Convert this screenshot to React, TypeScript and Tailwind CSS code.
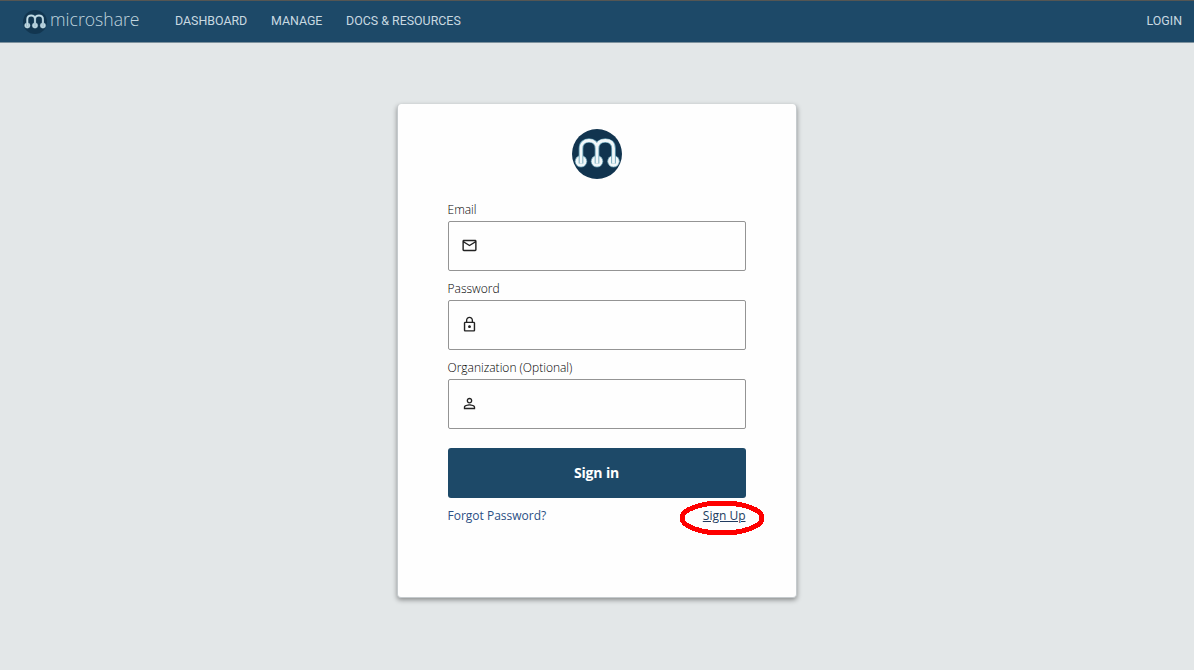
import type { ReactNode } from 'react';
import { MdLockOutline, MdMailOutline, MdPersonOutline } from 'react-icons/md';

function Logo({ className, disc, line, edge }: { className: string; disc: string; line: string; edge: string }) {
  const m = 'M9 34.5V19.5C9 14 12.5 11.5 17 11.5S25 14 25 19.5V34.5M25 19.5C25 14 28.5 11.5 33.3 11.5S41.5 14 41.5 19.5V34.5';
  return (
    <svg viewBox="0 0 50 50" className={className} fill="none" aria-hidden="true">
      <circle cx="25" cy="25" r="25" fill={disc} />
      <g fill={line} stroke={edge} strokeWidth="0.7">
        <circle cx="9" cy="32.3" r="5.8" />
        <circle cx="25" cy="32.3" r="5.8" />
        <circle cx="41.5" cy="32.3" r="5.8" />
      </g>
      <path d={m} stroke={edge} strokeWidth="4.6" />
      <path d={m} stroke={line} strokeWidth="2.8" />
    </svg>
  );
}

function Field({ label, type, icon }: { label: string; type: string; icon: ReactNode }) {
  return (
    <label className="block h-[79px]">
      <span className="-ml-[0.5px] block h-[21px] pt-px text-[12px] leading-[18px] font-light text-black">{label}</span>
      <span className="flex h-[50px] items-center rounded-[2px] border border-[#949494] pb-[2px] pl-[12px] text-[17px] text-[#222]">
        {icon}
        <input type={type} className="ml-3 min-w-0 flex-1 outline-none" />
      </span>
    </label>
  );
}

export default function App() {
  return (
    <div className="flex h-[670px] flex-col bg-[#e3e7e8] font-['Open_Sans',sans-serif]">
      <header className="flex h-[43px] shrink-0 items-center border-t border-b border-t-[#555653] border-b-[#7e929e] bg-[#1d4968] pr-3 pl-[23px] font-[Roboto,sans-serif] text-[12.4px] text-[#c9d9e1]">
        <Logo className="size-6" disc="#123650" line="#c4dbe4" edge="#7fa6b8" />
        <svg className="ml-[3px] h-8 w-[91px]" viewBox="0 0 91 32">
          <text
            x="0"
            y="20"
            textLength="89.5"
            lengthAdjust="spacingAndGlyphs"
            className="fill-[#c0d5df] font-['Open_Sans',sans-serif] text-[18px] font-light"
          >
            microshare
          </text>
        </svg>
        <nav className="ml-[34px] flex gap-[23.7px] pb-px">
          <a href="#dashboard">DASHBOARD</a>
          <a href="#manage">MANAGE</a>
          <a href="#docs">DOCS &amp; RESOURCES</a>
        </nav>
        <a href="#login" className="ml-auto pb-px">LOGIN</a>
      </header>
      <main className="flex justify-center pt-[61px]">
        <section className="h-[494px] w-[400px] rounded-[4px] border-x border-b border-[#c5cacd] bg-[#fefefe] px-[50px] pt-[25px] shadow-[0_2px_5px_rgba(0,0,0,0.4)]">
          <Logo className="mx-auto size-[50px]" disc="#11344f" line="#f1f8fa" edge="#6ba3b8" />
          <form className="mt-[21px]">
            <Field label="Email" type="email" icon={<MdMailOutline />} />
            <Field label="Password" type="password" icon={<MdLockOutline />} />
            <Field label="Organization (Optional)" type="text" icon={<MdPersonOutline />} />
            <button type="button" className="mt-[11px] block h-[50px] w-full rounded-[3px] bg-[#1d4968] pr-px pb-[2px] text-[14px] font-bold tracking-[-0.15px] text-white">
              Sign in
            </button>
            <div className="mt-[9px] flex justify-between text-[12px] leading-[18px] text-[#2b4f84]">
              <a href="#forgot" className="-ml-[0.5px]">Forgot Password?</a>
              <span className="relative">
                <a href="#signup" className="mr-[0.5px] text-[#203b60] underline">Sign Up</a>
                <svg className="pointer-events-none absolute -top-[7px] -right-[19px] h-[36px] w-[86px]" viewBox="0 0 86 36" fill="none" shapeRendering="crispEdges">
                  <ellipse cx="43" cy="18" rx="40" ry="15" stroke="#fe0000" strokeWidth="5" />
                </svg>
              </span>
            </div>
          </form>
        </section>
      </main>
    </div>
  );
}
